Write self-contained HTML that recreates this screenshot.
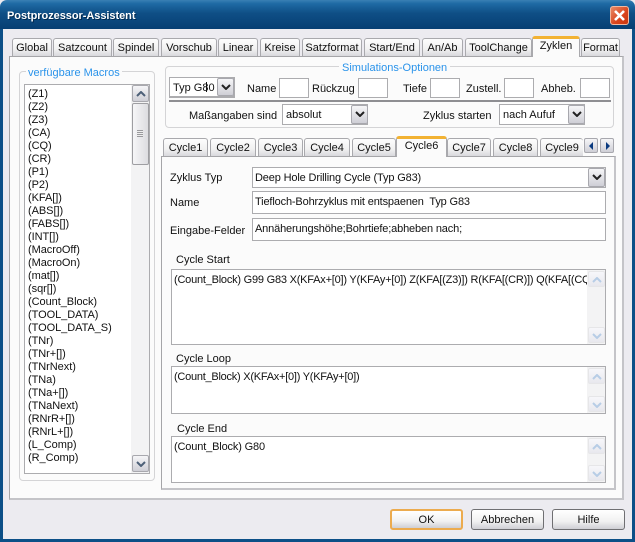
<!DOCTYPE html>
<html><head><meta charset="utf-8"><style>
html,body{margin:0;padding:0;background:#ecebf0}
#w{position:relative;width:635px;height:542px;overflow:hidden;background:#ecebf0;font:11px/13px "Liberation Sans",sans-serif;color:#111}
#w div,#w span.t{position:absolute;box-sizing:border-box}
.t{white-space:nowrap}
.tab{height:18px;top:38px;border:1px solid #a9a9ad;border-bottom:0;border-radius:3px 3px 0 0;background:linear-gradient(#fdfdfd,#f1f1f1 60%,#d8d8dc);text-align:center;line-height:19px;white-space:nowrap}
.tab.c{top:138px}
.sel{background:#fbfbfb;border-top:3px solid #f2b233;border-color:#a9a9ad;border-top-color:#f2b233;z-index:3;line-height:15px}
.pan{background:#fbfbfb;border:1px solid #a5a5a8;border-right:2px solid #c4c4c8;border-bottom:2px solid #c4c4c8}
.inp{background:#fff;border:1px solid #acacaf;white-space:nowrap;padding:3px 2px 0;overflow:hidden;letter-spacing:-.15px}
.btn{border:1px solid #6f6f72;border-radius:3px;background:linear-gradient(#fff,#f1f1f1 60%,#cfcfd4);text-align:center;line-height:20px}
.ar{width:17px;border:1px solid #a8a8ae;border-radius:2px;background:linear-gradient(#f5f5f7,#cfcfd6)}
.ar svg,.sb svg{position:absolute;left:3px;top:5px}
.lb{color:#2a93ea}
.grp{border:1px solid #d4d4d6;border-radius:4px}
.sb{width:17px;border:1px solid #e6e6e8;border-radius:2px;background:linear-gradient(#f7f7fa,#e8e8ee)}
.tr{background:#f3f3f4;width:18px}
</style></head><body><div id="w">
<!-- frame -->
<div style="left:0;top:0;width:635px;height:29px;background:linear-gradient(#3a80b4,#1f6ba5 12%,#0f4f86 45%,#063f73);border-radius:7px 7px 0 0"></div>
<div style="left:0;top:29px;width:3px;height:513px;background:#0c4f87"></div>
<div style="left:632px;top:29px;width:3px;height:513px;background:#0c4f87"></div>
<div style="left:0;top:539px;width:635px;height:3px;background:#0c4f87"></div>
<span class="t" style="left:7px;top:9px;color:#fff;font-weight:bold;font-size:11px;letter-spacing:-.05px;line-height:14px;text-shadow:1px 1px 0 #03294d">Postprozessor-Assistent</span>
<div style="left:610px;top:6px;width:19px;height:19px;border:1px solid #f0b8a0;border-radius:3px;background:linear-gradient(135deg,#e98a66,#d8431c 60%,#c8360f)"><svg width="17" height="17" style="position:absolute;left:0;top:0"><path d="M4 4L13 13M13 4L4 13" stroke="#fff" stroke-width="2.6"/></svg></div>

<!-- main panel -->
<div class="pan" style="left:9px;top:56px;width:615px;height:444px"></div>
<div class="tab" style="left:12px;width:40px">Global</div>
<div class="tab" style="left:53px;width:59px">Satzcount</div>
<div class="tab" style="left:113px;width:46px">Spindel</div>
<div class="tab" style="left:161px;width:56px">Vorschub</div>
<div class="tab" style="left:218px;width:40px">Linear</div>
<div class="tab" style="left:260px;width:40px">Kreise</div>
<div class="tab" style="left:302px;width:60px">Satzformat</div>
<div class="tab" style="left:364px;width:56px">Start/End</div>
<div class="tab" style="left:422px;width:41px">An/Ab</div>
<div class="tab" style="left:465px;width:67px">ToolChange</div>
<div class="tab sel" style="left:532px;top:36px;width:48px;height:21px">Zyklen</div>
<div class="tab" style="left:581px;width:39px">Format</div>

<!-- macros group -->
<div class="grp" style="left:19px;top:71px;width:136px;height:410px"></div>
<span class="t lb" style="left:26px;top:67px;background:#fbfbfb;padding:0 2px">verfügbare Macros</span>
<div class="inp" style="left:24px;top:84px;width:126px;height:390px;padding:0"></div>
<div class="t" style="left:28px;top:88px;width:100px;line-height:13px;white-space:pre;letter-spacing:-.05px">(Z1)
(Z2)
(Z3)
(CA)
(CQ)
(CR)
(P1)
(P2)
(KFA[])
(ABS[])
(FABS[])
(INT[])
(MacroOff)
(MacroOn)
(mat[])
(sqr[])
(Count_Block)
(TOOL_DATA)
(TOOL_DATA_S)
(TNr)
(TNr+[])
(TNrNext)
(TNa)
(TNa+[])
(TNaNext)
(RNrR+[])
(RNrL+[])
(L_Comp)
(R_Comp)</div>
<div class="tr" style="left:131px;top:85px;height:388px"></div>
<div class="ar" style="left:132px;top:85px;height:17px"><svg width="10" height="6"><path d="M1 5L5 1L9 5" fill="none" stroke="#4d6078" stroke-width="2"/></svg></div>
<div class="ar" style="left:132px;top:103px;height:62px;background:linear-gradient(90deg,#f6f6f8,#dcdce0);border-color:#9e9ea2"></div>
<div style="left:137px;top:130px;width:6px;height:7px;background:repeating-linear-gradient(#9a9a9e 0 1px,#eee 1px 2px)"></div>
<div class="ar" style="left:132px;top:455px;height:17px"><svg width="10" height="6"><path d="M1 1L5 5L9 1" fill="none" stroke="#4d6078" stroke-width="2"/></svg></div>

<!-- simulation group -->
<div class="grp" style="left:165px;top:66px;width:449px;height:62px"></div>
<span class="t lb" style="left:339px;top:62px;background:#fbfbfb;padding:0 3px">Simulations-Optionen</span>
<div class="inp" style="left:169px;top:77px;width:66px;height:21px;border-width:1px 2px 2px 1px;line-height:14px;padding-left:3px;letter-spacing:0">Typ G80</div>
<div style="left:206px;top:82px;width:1px;height:10px;background:#111"></div>
<div class="ar" style="left:217px;top:78px;height:18px"><svg width="10" height="6"><path d="M1 1L5 5L9 1" fill="none" stroke="#222" stroke-width="2"/></svg></div>
<span class="t" style="left:247px;top:83px">Name</span>
<div class="inp" style="left:279px;top:78px;width:30px;height:20px"></div>
<span class="t" style="left:312px;top:83px">Rückzug</span>
<div class="inp" style="left:358px;top:78px;width:30px;height:20px"></div>
<span class="t" style="left:403px;top:83px">Tiefe</span>
<div class="inp" style="left:430px;top:78px;width:30px;height:20px"></div>
<span class="t" style="left:466px;top:83px">Zustell.</span>
<div class="inp" style="left:504px;top:78px;width:30px;height:20px"></div>
<span class="t" style="left:541px;top:83px">Abheb.</span>
<div class="inp" style="left:580px;top:78px;width:30px;height:20px"></div>
<div style="left:169px;top:100px;width:442px;height:2px;background:#8e8e92"></div>
<span class="t" style="left:189px;top:110px">Maßangaben sind</span>
<div class="inp" style="left:282px;top:104px;width:86px;height:21px;line-height:15px;padding-left:3px;letter-spacing:0">absolut</div>
<div class="ar" style="left:351px;top:105px;height:19px"><svg width="10" height="6"><path d="M1 1L5 5L9 1" fill="none" stroke="#222" stroke-width="2"/></svg></div>
<span class="t" style="left:423px;top:110px">Zyklus starten</span>
<div class="inp" style="left:499px;top:104px;width:86px;height:21px;line-height:15px;padding-left:3px;letter-spacing:0">nach Aufuf</div>
<div class="ar" style="left:568px;top:105px;height:19px"><svg width="10" height="6"><path d="M1 1L5 5L9 1" fill="none" stroke="#222" stroke-width="2"/></svg></div>

<!-- cycle panel -->
<div class="pan" style="left:161px;top:156px;width:455px;height:334px"></div>
<div class="tab c" style="left:163px;width:45px">Cycle1</div>
<div class="tab c" style="left:210px;width:46px">Cycle2</div>
<div class="tab c" style="left:258px;width:45px">Cycle3</div>
<div class="tab c" style="left:304px;width:46px">Cycle4</div>
<div class="tab c" style="left:352px;width:44px">Cycle5</div>
<div class="tab c sel" style="left:396px;top:136px;width:51px;height:21px">Cycle6</div>
<div class="tab c" style="left:447px;width:44px">Cycle7</div>
<div class="tab c" style="left:493px;width:45px">Cycle8</div>
<div class="tab c" style="left:540px;width:43px;border-right:0;overflow:hidden">Cycle9</div>
<div class="ar" style="left:584px;top:138px;width:14px;height:15px"><svg width="8" height="8" style="left:2px;top:3px"><path d="M6 0L2 4L6 8Z" fill="#0b3b80"/></svg></div>
<div class="ar" style="left:600px;top:138px;width:14px;height:15px"><svg width="8" height="8" style="left:3px;top:3px"><path d="M2 0L6 4L2 8Z" fill="#0b3b80"/></svg></div>

<span class="t" style="left:170px;top:172px">Zyklus Typ</span>
<div class="inp" style="left:252px;top:167px;width:354px;height:21px;line-height:15px">Deep Hole Drilling Cycle (Typ G83)</div>
<div class="ar" style="left:588px;top:168px;height:19px"><svg width="10" height="6"><path d="M1 1L5 5L9 1" fill="none" stroke="#222" stroke-width="2"/></svg></div>
<span class="t" style="left:170px;top:197px">Name</span>
<div class="inp" style="left:252px;top:191px;width:354px;height:23px;line-height:15px">Tiefloch-Bohrzyklus mit entspaenen&nbsp; Typ G83</div>
<span class="t" style="left:170px;top:225px">Eingabe-Felder</span>
<div class="inp" style="left:252px;top:218px;width:354px;height:23px;line-height:15px">Annäherungshöhe;Bohrtiefe;abheben nach;</div>

<span class="t" style="left:176px;top:254px">Cycle Start</span>
<div class="inp" style="left:171px;top:269px;width:435px;height:76px;line-height:15px;letter-spacing:-.22px">(Count_Block) G99 G83 X(KFAx+[0]) Y(KFAy+[0]) Z(KFA[(Z3)]) R(KFA[(CR)]) Q(KFA[(CQ</div>
<div class="tr" style="left:587px;top:270px;height:74px"></div>
<div class="sb" style="left:588px;top:271px;height:16px"><svg width="10" height="6"><path d="M1 5L5 1L9 5" fill="none" stroke="#b7cde6" stroke-width="2"/></svg></div>
<div class="sb" style="left:588px;top:327px;height:16px"><svg width="10" height="6"><path d="M1 1L5 5L9 1" fill="none" stroke="#b7cde6" stroke-width="2"/></svg></div>

<span class="t" style="left:176px;top:353px">Cycle Loop</span>
<div class="inp" style="left:171px;top:366px;width:435px;height:48px;line-height:15px;letter-spacing:-.25px">(Count_Block) X(KFAx+[0]) Y(KFAy+[0])</div>
<div class="tr" style="left:587px;top:367px;height:46px"></div>
<div class="sb" style="left:588px;top:368px;height:16px"><svg width="10" height="6"><path d="M1 5L5 1L9 5" fill="none" stroke="#b7cde6" stroke-width="2"/></svg></div>
<div class="sb" style="left:588px;top:396px;height:16px"><svg width="10" height="6"><path d="M1 1L5 5L9 1" fill="none" stroke="#b7cde6" stroke-width="2"/></svg></div>

<span class="t" style="left:177px;top:423px">Cycle End</span>
<div class="inp" style="left:171px;top:436px;width:435px;height:47px;line-height:15px">(Count_Block) G80</div>
<div class="tr" style="left:587px;top:437px;height:45px"></div>
<div class="sb" style="left:588px;top:438px;height:16px"><svg width="10" height="6"><path d="M1 5L5 1L9 5" fill="none" stroke="#b7cde6" stroke-width="2"/></svg></div>
<div class="sb" style="left:588px;top:465px;height:16px"><svg width="10" height="6"><path d="M1 1L5 5L9 1" fill="none" stroke="#b7cde6" stroke-width="2"/></svg></div>

<!-- buttons -->
<div class="btn" style="left:390px;top:509px;width:73px;height:21px;border:2px solid #ecab4e;line-height:18px">OK</div>
<div class="btn" style="left:471px;top:509px;width:73px;height:21px">Abbrechen</div>
<div class="btn" style="left:552px;top:509px;width:73px;height:21px">Hilfe</div>
</div></body></html>
